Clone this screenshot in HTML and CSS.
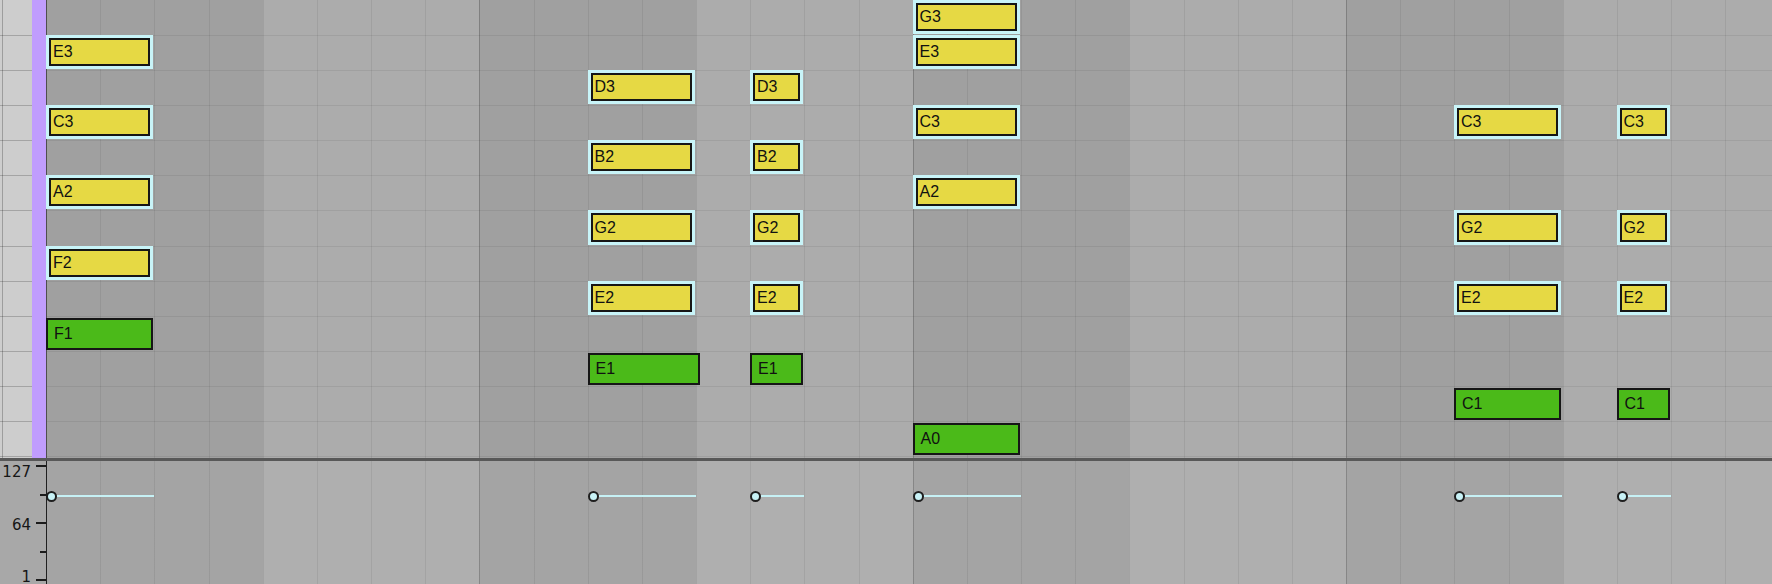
FILE: index.html
```html
<!DOCTYPE html>
<html lang="en">
<head>
  <meta charset="UTF-8">
  <meta name="viewport" content="width=device-width, initial-scale=1.0">
  <title>piano roll</title>
  <link rel="stylesheet" href="styles.css">
</head>
<body>
<div class="editor">
  <div class="roll">
    <div class="keys"></div>
    <div class="fold"></div>
    <div class="notes">
      <!-- chord 1 -->
      <div class="note sel" style="grid-area: 2 / 1 / span 1 / span 2">E3</div>
      <div class="note sel" style="grid-area: 4 / 1 / span 1 / span 2">C3</div>
      <div class="note sel" style="grid-area: 6 / 1 / span 1 / span 2">A2</div>
      <div class="note sel" style="grid-area: 8 / 1 / span 1 / span 2">F2</div>
      <div class="note bass" style="grid-area: 10 / 1 / span 1 / span 2">F1</div>
      <!-- chord 2 -->
      <div class="note sel" style="grid-area: 3 / 11 / span 1 / span 2">D3</div>
      <div class="note sel" style="grid-area: 5 / 11 / span 1 / span 2">B2</div>
      <div class="note sel" style="grid-area: 7 / 11 / span 1 / span 2">G2</div>
      <div class="note sel" style="grid-area: 9 / 11 / span 1 / span 2">E2</div>
      <div class="note bass long" style="grid-area: 11 / 11 / span 1 / span 2">E1</div>
      <!-- chord 3 -->
      <div class="note sel" style="grid-area: 3 / 14 / span 1 / span 1">D3</div>
      <div class="note sel" style="grid-area: 5 / 14 / span 1 / span 1">B2</div>
      <div class="note sel" style="grid-area: 7 / 14 / span 1 / span 1">G2</div>
      <div class="note sel" style="grid-area: 9 / 14 / span 1 / span 1">E2</div>
      <div class="note bass" style="grid-area: 11 / 14 / span 1 / span 1">E1</div>
      <!-- chord 4 -->
      <div class="note sel" style="grid-area: 1 / 17 / span 1 / span 2">G3</div>
      <div class="note sel" style="grid-area: 2 / 17 / span 1 / span 2">E3</div>
      <div class="note sel" style="grid-area: 4 / 17 / span 1 / span 2">C3</div>
      <div class="note sel" style="grid-area: 6 / 17 / span 1 / span 2">A2</div>
      <div class="note bass" style="grid-area: 13 / 17 / span 1 / span 2">A0</div>
      <!-- chord 5 -->
      <div class="note sel" style="grid-area: 4 / 27 / span 1 / span 2">C3</div>
      <div class="note sel" style="grid-area: 7 / 27 / span 1 / span 2">G2</div>
      <div class="note sel" style="grid-area: 9 / 27 / span 1 / span 2">E2</div>
      <div class="note bass" style="grid-area: 12 / 27 / span 1 / span 2">C1</div>
      <!-- chord 6 -->
      <div class="note sel" style="grid-area: 4 / 30 / span 1 / span 1">C3</div>
      <div class="note sel" style="grid-area: 7 / 30 / span 1 / span 1">G2</div>
      <div class="note sel" style="grid-area: 9 / 30 / span 1 / span 1">E2</div>
      <div class="note bass" style="grid-area: 12 / 30 / span 1 / span 1">C1</div>
    </div>
  </div>

  <div class="divider"></div>

  <div class="velocity">
    <div class="vel-scale">
      <div class="vel-labels">
        <span>127</span>
        <span>64</span>
        <span>1</span>
      </div>
      <div class="vel-ticks">
        <i class="major"></i>
        <i></i>
        <i class="major"></i>
        <i></i>
        <i class="major"></i>
      </div>
    </div>
    <div class="vel-lane">
      <div class="stem" style="grid-column: 1 / span 2"><span class="dot"></span><span class="bar"></span></div>
      <div class="stem" style="grid-column: 11 / span 2"><span class="dot"></span><span class="bar"></span></div>
      <div class="stem" style="grid-column: 14 / span 1"><span class="dot"></span><span class="bar"></span></div>
      <div class="stem" style="grid-column: 17 / span 2"><span class="dot"></span><span class="bar"></span></div>
      <div class="stem" style="grid-column: 27 / span 2"><span class="dot"></span><span class="bar"></span></div>
      <div class="stem" style="grid-column: 30 / span 1"><span class="dot"></span><span class="bar"></span></div>
    </div>
  </div>
</div>
</body>
</html>
```

FILE: styles.css
```css
body {
    margin: 0;
    background-color: #a8a8a8;
    font-family: "Liberation Sans", Arial, sans-serif;
    overflow: hidden;
}

.editor {
    width: 1772px;
    height: 584px;
    display: flex;
    flex-direction: column;
}

/* ---- note area ---- */
.roll {
    height: 458px;
    display: flex;
}

.keys {
    width: 32px;
    flex: none;
    background:
        repeating-linear-gradient(180deg, transparent 0 34.08px, rgba(0,0,0,.2) 34.08px 35.08px) 0 1px,
        linear-gradient(90deg, #cdcdcd 0 2px, #9d9d9d 2px 3px, #cdcdcd 3px);
}

.fold {
    width: 14px;
    flex: none;
    background-color: #c09dfd;
}

.notes {
    flex: 1;
    display: grid;
    grid-template-columns: repeat(32, 54.17px);
    grid-template-rows: repeat(13, 35.08px);
    overflow: hidden;
    box-shadow: inset 1px 0 0 #4e4e4e;
    background:
        repeating-linear-gradient(90deg, rgba(0,0,0,.14) 0 1px, transparent 1px 433.36px),
        repeating-linear-gradient(90deg, rgba(0,0,0,.07) 0 1px, transparent 1px 54.17px),
        repeating-linear-gradient(180deg, transparent 0 34.08px, rgba(0,0,0,.07) 34.08px 35.08px) 0 1px,
        repeating-linear-gradient(90deg, #a0a0a0 0 216.68px, #acacac 216.68px 433.36px);
}

.note {
    display: flex;
    align-items: center;
    margin: 1px 1px 1px 0;
    box-sizing: border-box;
    font-size: 16px;
    line-height: 1;
    color: #111;
    white-space: nowrap;
    overflow: hidden;
}
.note.sel {
    margin-top: 0;
    padding-left: 4px;
    background-color: #e6d944;
    border: 3px solid #c8f4f8;
    box-shadow: inset 0 0 0 2px #161616;
}
.note.bass {
    margin-top: 2px;
    padding-left: 6px;
    background-color: #4bba19;
    border: 2px solid #161616;
}
.note.long {
    margin-right: -4px;
}

.divider {
    height: 3px;
    background-color: #585858;
}

/* ---- velocity lane ---- */
.velocity {
    flex: 1;
    display: flex;
}

.vel-scale {
    width: 46px;
    flex: none;
    display: flex;
    background-color: #a8a8a8;
}

.vel-labels {
    width: 32px;
    display: flex;
    flex-direction: column;
    justify-content: space-between;
    align-items: flex-end;
    padding: 3px 1px 0 0;
    box-sizing: border-box;
    font-family: "DejaVu Sans", sans-serif;
    font-size: 15px;
    line-height: 16px;
    color: #161616;
}
.vel-labels span:last-child {
    margin-bottom: -1px;
}

.vel-ticks {
    flex: 1;
    display: flex;
    flex-direction: column;
    justify-content: space-between;
    align-items: flex-end;
    padding: 4px 0 3px;
}
.vel-ticks i {
    display: block;
    width: 6px;
    height: 2px;
    background-color: #1b1b1b;
}
.vel-ticks i.major {
    width: 10px;
}

.vel-lane {
    flex: 1;
    display: grid;
    grid-template-columns: repeat(32, 54.17px);
    grid-template-rows: 12px;
    align-content: start;
    padding-top: 29px;
    overflow: hidden;
    box-shadow: inset 1px 0 0 #202020;
    background:
        repeating-linear-gradient(90deg, rgba(0,0,0,.12) 0 1px, transparent 1px 433.36px),
        repeating-linear-gradient(90deg, rgba(0,0,0,.07) 0 1px, transparent 1px 54.17px),
        repeating-linear-gradient(90deg, #a4a4a4 0 216.68px, #afafaf 216.68px 433.36px);
}

.stem {
    display: flex;
    align-items: center;
}
.dot {
    width: 11px;
    height: 11px;
    flex: none;
    box-sizing: border-box;
    border-radius: 50%;
    border: 2px solid #1e1e1e;
    background-color: #c8f2f6;
    position: relative;
    z-index: 1;
}
.bar {
    flex: 1;
    height: 2px;
    background-color: #c6f1f5;
}
```
